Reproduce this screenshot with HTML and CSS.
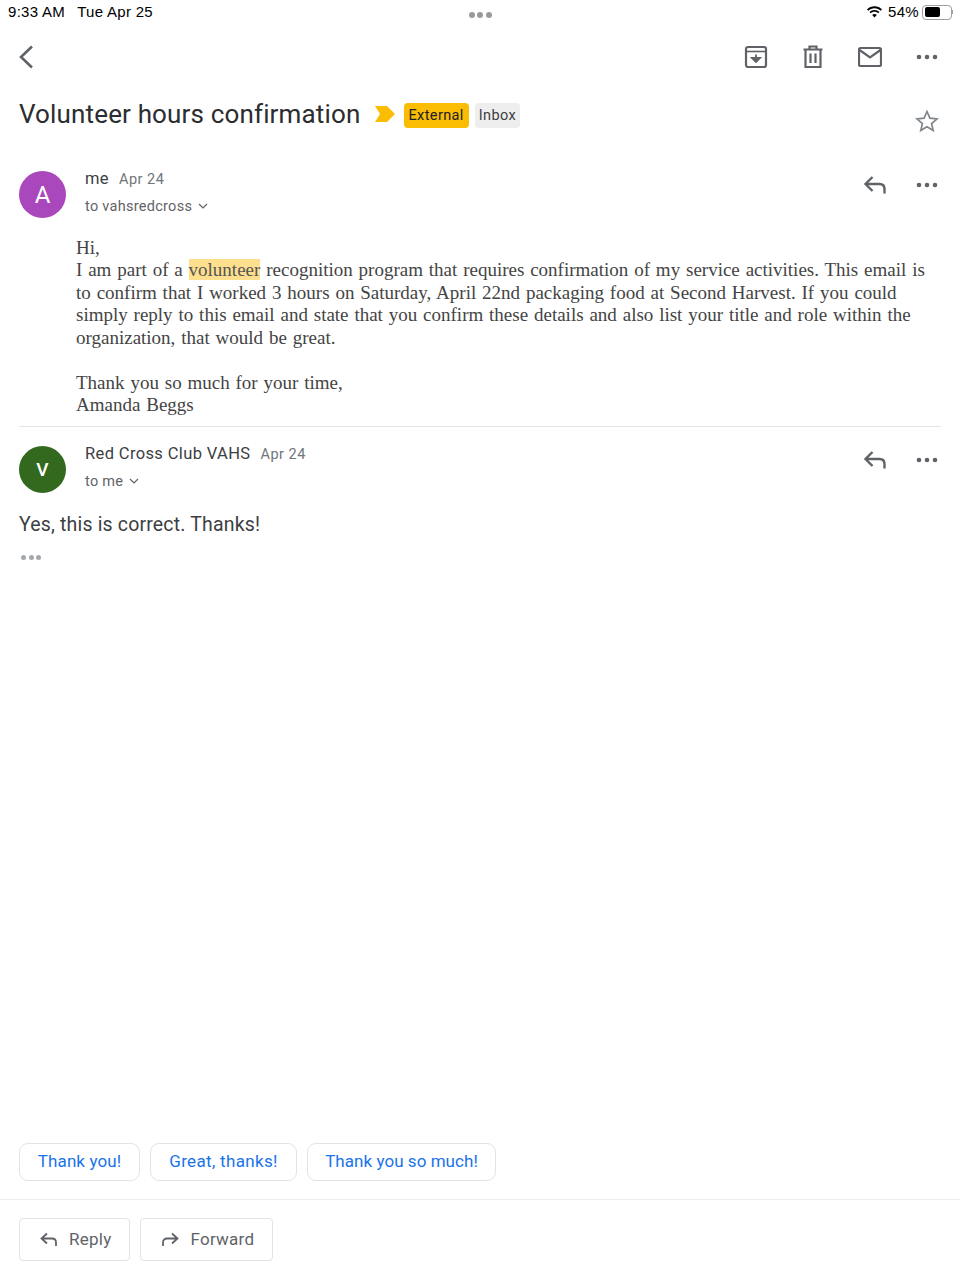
FILE: index.html
```html
<!DOCTYPE html>
<html lang="en">
<head>
<meta charset="utf-8">
<title>Volunteer hours confirmation</title>
<link rel="stylesheet" href="styles.css">
</head>
<body>
<div class="page">
  <div class="status">
    <div class="status-left"><span>9:33 AM</span><span>Tue Apr 25</span></div>
    <div class="status-dots"><i></i><i></i><i></i></div>
    <div class="status-right">
      <svg class="wifi" width="17" height="12" viewBox="0 0 17 12"><path d="M8.5 2.2c2.4 0 4.6.9 6.3 2.5l1.2-1.3C14 1.400 11.400.3 8.500.3S3 1.400 1 3.400l1.200 1.300C3.900 3.100 6.100 2.200 8.500 2.200zM8.500 5.700c1.400 0 2.700.5 3.700 1.500l1.300-1.300C12.200 4.600 10.400 3.900 8.500 3.900s-3.700.7-5 2l1.300 1.300c1-1 2.300-1.500 3.700-1.500zM8.500 11.500l2.300-2.500c-.6-.6-1.400-.9-2.300-.9s-1.700.3-2.300.9z" fill="#000"/></svg>
      <span>54%</span>
      <span class="battery"><span class="battery-fill"></span></span><span class="battery-tip"></span>
    </div>
  </div>

  <div class="toolbar">
    <svg class="back" width="16" height="26" viewBox="0 0 16 26"><path d="M14 2.500 3 13l11 10.500" fill="none" stroke="#5f6368" stroke-width="2.600"/></svg>
    <div class="tools">
      <svg width="24" height="24" viewBox="0 0 24 24"><rect x="2" y="2" width="20" height="20" rx="2" fill="none" stroke="#5f6368" stroke-width="2.200"/><path d="M2 6.500h20" stroke="#5f6368" stroke-width="1.600"/><path d="M12 9.500v6M8 13l4 4 4-4z" stroke="#5f6368" stroke-width="1.800" fill="#5f6368"/></svg>
      <svg width="24" height="24" viewBox="0 0 24 24"><path d="M2.500 4.500h19M8.500 4V1.500h7V4M4.500 4.500V22h15V4.500M9.500 8.500v9.500M14.500 8.500v9.500" fill="none" stroke="#5f6368" stroke-width="2.200"/></svg>
      <svg width="24" height="24" viewBox="0 0 24 24"><rect x="1" y="3" width="22" height="18" rx="1.500" fill="none" stroke="#5f6368" stroke-width="2.200"/><path d="M1.500 5 12 12.500 22.500 5" fill="none" stroke="#5f6368" stroke-width="2.200"/></svg>
      <svg width="24" height="24" viewBox="0 0 24 24"><circle cx="4" cy="12" r="2.300" fill="#5f6368"/><circle cx="12" cy="12" r="2.300" fill="#5f6368"/><circle cx="20" cy="12" r="2.300" fill="#5f6368"/></svg>
    </div>
  </div>

  <div class="subject">
    <h1>Volunteer hours confirmation</h1>
    <svg class="marker" width="20" height="16" viewBox="0 0 20 16"><path d="M0 0h12l8 8-8 8H0l5-8z" fill="#fbbc04"/></svg>
    <span class="tag tag-external">External</span>
    <span class="tag tag-inbox">Inbox</span>
    <svg class="star" width="24" height="24" viewBox="0 0 24 24"><path d="m12 2.500 2.900 6.600 7.100.7-5.400 4.700 1.600 7-6.200-3.700-6.200 3.700 1.600-7L2 9.800l7.100-.7z" fill="none" stroke="#80868b" stroke-width="1.700"/></svg>
  </div>

  <div class="message first">
    <div class="avatar avatar-a">A</div>
    <div class="meta">
      <div class="meta-top"><span class="sender">me</span><span class="date">Apr 24</span></div>
      <div class="meta-to"><span>to vahsredcross</span><svg width="10" height="6" viewBox="0 0 10 6"><path d="m1 1 4 4 4-4" fill="none" stroke="#5f6368" stroke-width="1.200"/></svg></div>
    </div>
    <div class="msg-actions">
      <svg width="24" height="20" viewBox="0 0 24 20"><path d="M9.500 2 2.500 9l7 7M3 9h13.500c3 0 5 2 5 5v4.500" fill="none" stroke="#5f6368" stroke-width="2.400"/></svg>
      <svg width="24" height="24" viewBox="0 0 24 24"><circle cx="4" cy="12" r="2.300" fill="#5f6368"/><circle cx="12" cy="12" r="2.300" fill="#5f6368"/><circle cx="20" cy="12" r="2.300" fill="#5f6368"/></svg>
    </div>
  </div>
  <div class="serif-body">
    <p>Hi,<br>I am part of a <mark>volunteer</mark> recognition program that requires confirmation of my service activities. This email is to confirm that I worked 3 hours on Saturday, April 22nd packaging food at Second Harvest. If you could simply reply to this email and state that you confirm these details and also list your title and role within the organization, that would be great.</p>
    <p>Thank you so much for your time,<br>Amanda Beggs</p>
  </div>
  <div class="rule"></div>

  <div class="message second">
    <div class="avatar avatar-v">V</div>
    <div class="meta">
      <div class="meta-top"><span class="sender">Red Cross Club VAHS</span><span class="date">Apr 24</span></div>
      <div class="meta-to"><span>to me</span><svg width="10" height="6" viewBox="0 0 10 6"><path d="m1 1 4 4 4-4" fill="none" stroke="#5f6368" stroke-width="1.200"/></svg></div>
    </div>
    <div class="msg-actions">
      <svg width="24" height="20" viewBox="0 0 24 20"><path d="M9.500 2 2.500 9l7 7M3 9h13.500c3 0 5 2 5 5v4.500" fill="none" stroke="#5f6368" stroke-width="2.400"/></svg>
      <svg width="24" height="24" viewBox="0 0 24 24"><circle cx="4" cy="12" r="2.300" fill="#5f6368"/><circle cx="12" cy="12" r="2.300" fill="#5f6368"/><circle cx="20" cy="12" r="2.300" fill="#5f6368"/></svg>
    </div>
  </div>
  <p class="reply-text">Yes, this is correct. Thanks!</p>
  <div class="quoted"><i></i><i></i><i></i></div>

  <div class="spacer"></div>

  <div class="chips">
    <span class="chip">Thank you!</span>
    <span class="chip">Great, thanks!</span>
    <span class="chip">Thank you so much!</span>
  </div>
  <div class="footer">
    <span class="btn">
      <svg width="18" height="14" viewBox="0 0 18 14"><path d="M7 1.500 1.500 6.500 7 11.500M2 6.500h10c2.500 0 4 1.500 4 4V14" fill="none" stroke="#5f6368" stroke-width="1.800"/></svg>
      Reply
    </span>
    <span class="btn">
      <svg width="18" height="14" viewBox="0 0 18 14"><path d="M11 1.500 16.500 6.500 11 11.500M16 6.500H6c-2.500 0-4 1.500-4 4V14" fill="none" stroke="#5f6368" stroke-width="1.800"/></svg>
      Forward
    </span>
  </div>
</div>
</body>
</html>
```

FILE: styles.css
```css
* { box-sizing: border-box; }
html, body { margin: 0; padding: 0; background: #fff; }
.page {
  width: 960px;
  height: 1280px;
  display: flex;
  flex-direction: column;
  font-family: Roboto, "Liberation Sans", sans-serif;
  color: #3c4043;
  overflow: hidden;
}
.status {
  height: 28px;
  flex: none;
  display: flex;
  align-items: flex-start;
  justify-content: space-between;
  padding: 3px 7px 0 8px;
  font-family: "Liberation Sans", sans-serif;
  font-size: 15px;
  line-height: 18px;
  color: #000;
  letter-spacing: .3px;
}
.status-left { display: flex; gap: 12px; width: 300px; }
.status-dots { display: flex; gap: 2.500px; padding-top: 9px; margin-left: -1px; }
.status-dots i { width: 6px; height: 6px; border-radius: 50%; background: #9a9a9a; }
.status-right { width: 300px; display: flex; align-items: center; justify-content: flex-end; }
.wifi { margin-right: 5px; }
.battery {
  margin-left: 3px;
  width: 30px;
  height: 15px;
  border: 1px solid #a0a0a0;
  border-radius: 4px;
  padding: 1.500px;
  display: block;
}
.battery-fill { display: block; width: 15px; height: 100%; background: #000; border-radius: 2px; }
.battery-tip { width: 1px; height: 4px; background: #a0a0a0; }
.toolbar {
  height: 58px;
  flex: none;
  display: flex;
  align-items: center;
  justify-content: space-between;
  padding: 0 21px 0 18px;
}
.tools { display: flex; gap: 33px; }
.subject {
  height: 56px;
  flex: none;
  display: flex;
  align-items: center;
  padding: 0 21px 0 19px;
}
h1 {
  margin: 0;
  font-size: 26px;
  font-weight: 400;
  color: #2b2d30;
  width: 356px;
  white-space: nowrap;
  letter-spacing: .15px;
}
.tag {
  height: 25px;
  margin-top: 2px;
  border-radius: 4px;
  font-size: 14.500px;
  line-height: 25px;
  color: #3c4043;
  padding: 0 4px;
  letter-spacing: .38px;
}
.marker { margin-right: 9px; }
.tag-external { background: #fbbc04; color: #202124; margin-right: 6px; padding: 0 5px 0 4.500px; }
.tag-inbox { background: #eeeeee; }
.star { margin-left: auto; margin-top: 14px; }
.message {
  flex: none;
  display: flex;
  align-items: flex-start;
  padding: 0 21px 0 19px;
}
.first { margin-top: 29px; height: 65.500px; }
.second { margin-top: 19px; height: 60px; }
.avatar {
  width: 47px;
  height: 47px;
  border-radius: 50%;
  color: #fff;
  display: flex;
  align-items: center;
  justify-content: center;
  flex: none;
}
.avatar-a { background: #ab47bc; font-size: 24px; }
.avatar-v { background: #33691e; font-size: 19px; font-weight: 500; }
.meta { margin-left: 19px; margin-top: -1.500px; flex: 1; }
.meta-top { display: flex; align-items: baseline; gap: 10px; height: 17px; line-height: 17px; }
.sender { font-size: 16.500px; color: #3c4043; letter-spacing: .37px; }
.date { font-size: 14.500px; color: #70757a; letter-spacing: .5px; }
.meta-to {
  display: flex;
  align-items: center;
  gap: 6px;
  margin-top: 9.500px;
  height: 20px;
  font-size: 14.500px;
  letter-spacing: .28px;
  color: #5f6368;
}
.msg-actions { display: flex; align-items: center; gap: 28px; height: 28px; }
.serif-body {
  flex: none;
  margin: 0 30px 0 76px;
  font-family: "Liberation Serif", serif;
  font-size: 19px;
  line-height: 22.500px;
  word-spacing: 1.100px;
  color: #444;
  height: 189.500px;
}
.serif-body p { margin: 0 0 22.500px; }
mark { background: #fddf8e; color: #555; }
.rule { flex: none; height: 1px; margin: 0 19px; background: #e5e5e5; }
.reply-text {
  flex: none;
  margin: 3px 0 0;
  padding: 0 19px;
  height: 32px;
  font-size: 19.500px;
  line-height: 32px;
  letter-spacing: .17px;
  color: #3c4043;
}
.quoted { flex: none; display: flex; gap: 2.500px; padding: 14px 0 0 21px; height: 24px; }
.quoted i { width: 5px; height: 5px; border-radius: 50%; background: #a4a8ac; }
.spacer { flex: 1; }
.chips { flex: none; display: flex; gap: 10px; padding: 0 19px; height: 38px; margin-bottom: 18px; }
.chip {
  flex: none;
  border: 1.500px solid #e3e3e3;
  border-radius: 9px;
  font-size: 17px;
  line-height: 35px;
  text-align: center;
  color: #1a73e8;
  height: 38px;
}
.chip:nth-child(1) { width: 121px; letter-spacing: .1px; }
.chip:nth-child(2) { width: 147px; letter-spacing: .33px; }
.chip:nth-child(3) { width: 189px; letter-spacing: .05px; }
.footer {
  flex: none;
  border-top: 1px solid #eeeeee;
  height: 81px;
  padding: 18px 19px 0;
  display: flex;
  gap: 10px;
  align-items: flex-start;
}
.btn {
  height: 43px;
  border: 1.500px solid #e3e3e3;
  border-radius: 4px;
  padding: 0 18px 2px 20px;
  display: flex;
  align-items: center;
  gap: 11px;
  font-size: 17px;
  letter-spacing: .25px;
  color: #5f6368;
}
```
